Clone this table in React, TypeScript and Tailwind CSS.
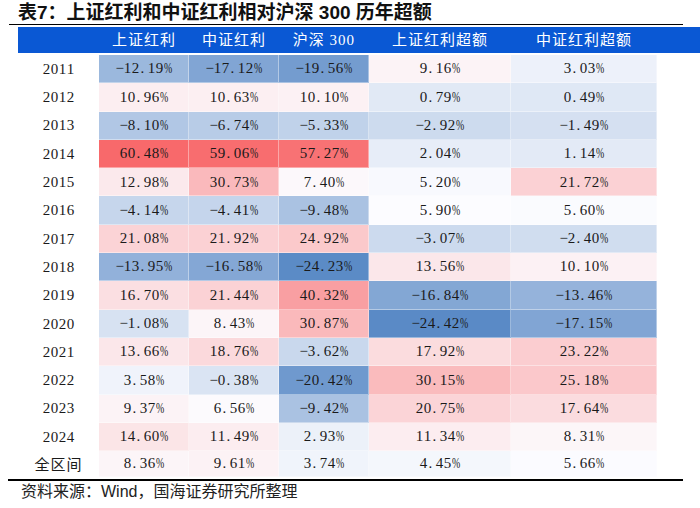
import React from "react";

type Row = [string, number, number, number, number, number];

const data: Row[] = [
  ["2011", -12.19, -17.12, -19.56, 9.16, 3.03],
  ["2012", 10.96, 10.63, 10.1, 0.79, 0.49],
  ["2013", -8.1, -6.74, -5.33, -2.92, -1.49],
  ["2014", 60.48, 59.06, 57.27, 2.04, 1.14],
  ["2015", 12.98, 30.73, 7.4, 5.2, 21.72],
  ["2016", -4.14, -4.41, -9.48, 5.9, 5.6],
  ["2017", 21.08, 21.92, 24.92, -3.07, -2.4],
  ["2018", -13.95, -16.58, -24.23, 13.56, 10.1],
  ["2019", 16.7, 21.44, 40.32, -16.84, -13.46],
  ["2020", -1.08, 8.43, 30.87, -24.42, -17.15],
  ["2021", 13.66, 18.76, -3.62, 17.92, 23.22],
  ["2022", 3.58, -0.38, -20.42, 30.15, 25.18],
  ["2023", 9.37, 6.56, -9.42, 20.75, 17.64],
  ["2024", 14.6, 11.49, 2.93, 11.34, 8.31],
  ["全区间", 8.36, 9.61, 3.74, 4.45, 5.66],
];

const all: number[] = data.flatMap((r) => r.slice(1) as number[]).sort((a, b) => a - b);
const minV = all[0];
const maxV = all[all.length - 1];
const mid = (() => {
  const n = all.length;
  const pos = (n - 1) * 0.5;
  const lo = Math.floor(pos);
  const hi = Math.ceil(pos);
  return all[lo] + (all[hi] - all[lo]) * (pos - lo);
})();

const BLUE = [90, 138, 198];
const WHITE = [252, 252, 255];
const RED = [248, 105, 107];

function colorFor(v: number): string {
  let b: number[], t: number;
  if (v <= mid) {
    t = (mid - v) / (mid - minV);
    b = BLUE;
  } else {
    t = (v - mid) / (maxV - mid);
    b = RED;
  }
  t = Math.max(0, Math.min(1, t));
  const c = WHITE.map((x, i) => Math.round(x + (b[i] - x) * t));
  return `rgb(${c[0]},${c[1]},${c[2]})`;
}

function fmt(v: number): string {
  const s = Math.abs(v).toFixed(2) + "%";
  return (v < 0 ? "−" : "") + s;
}

function Mono({ s }: { s: string }) {
  return (
    <span className="inline-flex">
      {s.split("").map((c, i) => {
        if (c === "%") {
          return (
            <span key={i} className="inline-block w-[8px] overflow-visible">
              <span className="inline-block origin-left scale-x-[0.66]">%</span>
            </span>
          );
        }
        if (c === ".") {
          return (
            <span key={i} className="inline-block w-[8px] text-left pl-[1px]">
              .
            </span>
          );
        }
        return (
          <span key={i} className="inline-block w-[8px] text-center">
            {c}
          </span>
        );
      })}
    </span>
  );
}

const widths = ["w-[81px]", "w-[90px]", "w-[90px]", "w-[90px]", "w-[142px]", "w-[146px]"];
const headers = ["", "上证红利", "中证红利", "沪深 300", "上证红利超额", "中证红利超额"];

const serif = "font-['Liberation_Serif','Noto_Sans_CJK_SC',serif]";

export default function App() {
  return (
    <div className="w-[700px] h-[508px] bg-white text-[#1a1a1a] overflow-hidden">
      <div className="h-[24px] pl-[18px] flex items-center text-[19px] font-bold leading-none font-['Liberation_Sans','Noto_Sans_CJK_SC',sans-serif] text-[#111]">
        表7：上证红利和中证红利相对沪深 300 历年超额
      </div>
      <div className="ml-[9px] w-[674px] h-px bg-black" />
      <div className={`ml-[18px] mt-[2px] flex h-[26px] bg-[#0A58D4] text-white text-[15px] ${serif}`}>
        {headers.map((h, i) => (
          <div key={i} className={`${widths[i]} flex items-center justify-center tracking-[1px]`}>
            {h}
          </div>
        ))}
      </div>
      <div className={`ml-[18px] mt-[2px] flex flex-col text-[15px] ${serif}`}>
        {data.map((r, ri) => {
          const last = ri === data.length - 1;
          return (
            <div key={ri} className={`flex ${last ? "h-[26px]" : "h-[28.3px]"}`}>
              <div className={`${widths[0]} flex items-center justify-center bg-white`}>
                {last ? (
                  <span className="font-['Noto_Sans_CJK_SC',sans-serif] text-[15px] tracking-[1px]">{r[0]}</span>
                ) : (
                  <Mono s={r[0]} />
                )}
              </div>
              {(r.slice(1) as number[]).map((v, ci) => (
                <div
                  key={ci}
                  className={`${widths[ci + 1]} flex items-center justify-center border-b border-r border-white/40`}
                  style={{ backgroundColor: colorFor(v) }}
                >
                  <Mono s={fmt(v)} />
                </div>
              ))}
            </div>
          );
        })}
      </div>
      <div className="ml-[8px] mt-[1.5px] w-[675px] h-[2px] bg-black" />
      <div className="h-[22px] pl-[21px] flex items-center text-[16px] text-[#222] font-['Liberation_Sans','Noto_Sans_CJK_SC',sans-serif]">
        资料来源：Wind，国海证券研究所整理
      </div>
    </div>
  );
}
